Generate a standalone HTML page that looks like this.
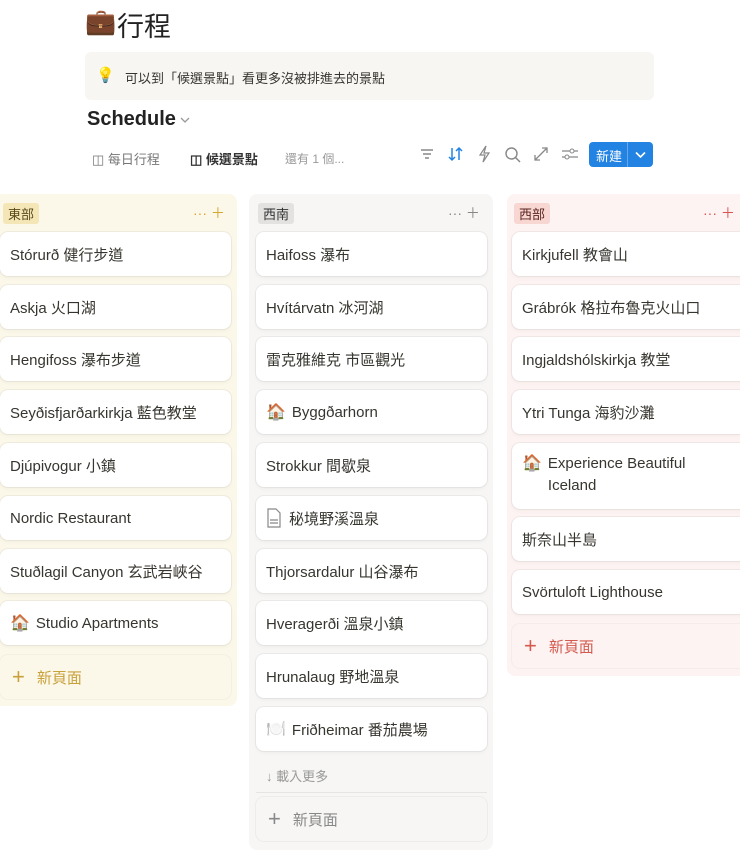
<!DOCTYPE html>
<html><head><meta charset="utf-8"><style>
*{box-sizing:border-box;margin:0;padding:0}
body{width:740px;height:857px;background:#fff;font-family:"Liberation Sans","Noto Sans CJK TC",sans-serif;color:#37352f;position:relative;overflow:hidden}
.a{position:absolute}
.col{position:absolute;border-radius:8px}
.card{position:absolute;height:44px;background:#fff;border-radius:8px;box-shadow:0 0 0 1px rgba(15,15,15,.05),0 2px 4px rgba(15,15,15,.04);font-size:15px;padding:0 10px;display:flex;align-items:center;white-space:nowrap}
.tag{position:absolute;font-size:13px;padding:1px 5px;border-radius:3px;top:203px}
.ic{font-size:16px;margin-right:6px}
.np{position:absolute;height:44px;border-radius:8px;font-size:15px;display:flex;align-items:center;padding-left:12px}
.np b{font-weight:300;font-size:22px;margin-right:12px}
svg{position:absolute}
</style></head><body>
<div class="a" style="left:85px;top:8px;font-size:25px">💼</div>
<div class="a" style="left:117px;top:5px;font-size:27px;color:#222">行程</div>
<div class="a" style="left:85px;top:52px;width:569px;height:48px;background:#f7f6f3;border-radius:6px"></div>
<div class="a" style="left:96px;top:66px;font-size:15px">💡</div>
<div class="a" style="left:125px;top:68px;font-size:13px">可以到「候選景點」看更多沒被排進去的景點</div>
<div class="a" style="left:87px;top:108px;font-size:20px;font-weight:bold;color:#222">Schedule</div>
<svg style="left:180px;top:116px" width="10" height="8"><path d="M1 2l4 4 4-4" stroke="#999" fill="none" stroke-width="1.3"/></svg>
<div class="a" style="left:92px;top:149px;font-size:13px;color:#777">◫ 每日行程</div>
<div class="a" style="left:190px;top:149px;font-size:13px;color:#333;font-weight:bold">◫ 候選景點</div>
<div class="a" style="left:285px;top:150px;font-size:12px;color:#999">還有 1 個...</div>
<svg style="left:419px;top:147px" width="16" height="14"><path d="M2 3h12M4 7h8M6 11h4" stroke="#888" stroke-width="1.4"/></svg>
<svg style="left:447px;top:146px" width="18" height="16"><path d="M5 2v12M2 11l3 3 3-3M12 14V2M9 5l3-3 3 3" stroke="#2383e2" fill="none" stroke-width="1.5"/></svg>
<svg style="left:477px;top:145px" width="14" height="18"><path d="M9 1L3 10h5l-2 7 6-9H7z" stroke="#888" fill="none" stroke-width="1.2"/></svg>
<svg style="left:504px;top:146px" width="18" height="18"><circle cx="7.5" cy="7.5" r="5.5" stroke="#888" fill="none" stroke-width="1.4"/><path d="M11.5 11.5l4.5 4.5" stroke="#888" stroke-width="1.5"/></svg>
<svg style="left:533px;top:146px" width="16" height="16"><path d="M2 14L14 2M9 2h5v5M2 9v5h5" stroke="#888" fill="none" stroke-width="1.3"/></svg>
<svg style="left:561px;top:147px" width="18" height="14"><path d="M1 4h16M1 10h16" stroke="#888" stroke-width="1.2"/><circle cx="11" cy="4" r="2" fill="#fff" stroke="#888"/><circle cx="6" cy="10" r="2" fill="#fff" stroke="#888"/></svg>
<div class="a" style="left:589px;top:142px;width:64px;height:25px;background:#2383e2;border-radius:4px;color:#fff;font-size:13px;padding:4px 7px">新建<span style="position:absolute;left:38px;top:0;height:25px;border-left:1px solid rgba(255,255,255,.3);width:26px"><svg style="left:7px;top:9px" width="11" height="8"><path d="M1 1.5l4.5 4.5 4.5-4.5" stroke="#fff" fill="none" stroke-width="1.6"/></svg></span></div>

<div class="col" style="left:-5px;top:194px;width:242px;height:512px;background:#fbf8ea"></div>
<div class="col" style="left:249px;top:194px;width:244px;height:656px;background:#f7f6f4"></div>
<div class="col" style="left:507px;top:194px;width:240px;height:482px;background:#fdf3f2"></div>

<div class="tag" style="left:3px;background:#f5e6b8;color:#5a4a1a">東部</div>
<div class="a" style="left:193px;top:203px;color:#d4a730;font-size:14px">··· ＋</div>
<div class="tag" style="left:258px;background:#e3e2e0;color:#333">西南</div>
<div class="a" style="left:448px;top:203px;color:#888;font-size:14px">··· ＋</div>
<div class="tag" style="left:514px;background:#f8d6d2;color:#5a2520">西部</div>
<div class="a" style="left:703px;top:203px;color:#d9534f;font-size:14px">··· ＋</div>

<div class="card" style="left:0;top:232px;width:231px">Stórurð 健行步道</div>
<div class="card" style="left:0;top:285px;width:231px">Askja 火口湖</div>
<div class="card" style="left:0;top:337px;width:231px">Hengifoss 瀑布步道</div>
<div class="card" style="left:0;top:390px;width:231px">Seyðisfjarðarkirkja 藍色教堂</div>
<div class="card" style="left:0;top:443px;width:231px">Djúpivogur 小鎮</div>
<div class="card" style="left:0;top:496px;width:231px">Nordic Restaurant</div>
<div class="card" style="left:0;top:549px;width:231px">Stuðlagil Canyon 玄武岩峽谷</div>
<div class="card" style="left:0;top:601px;width:231px"><span class="ic">🏠</span>Studio Apartments</div>
<div class="np" style="left:0;top:655px;width:231px;color:#c9a13a;background:#fbf8ea;box-shadow:0 0 0 1px rgba(0,0,0,.03)"><b>+</b>新頁面</div>

<div class="card" style="left:256px;top:232px;width:231px">Haifoss 瀑布</div>
<div class="card" style="left:256px;top:285px;width:231px">Hvítárvatn 冰河湖</div>
<div class="card" style="left:256px;top:337px;width:231px">雷克雅維克 市區觀光</div>
<div class="card" style="left:256px;top:390px;width:231px"><span class="ic">🏠</span>Byggðarhorn</div>
<div class="card" style="left:256px;top:443px;width:231px">Strokkur 間歇泉</div>
<div class="card" style="left:256px;top:496px;width:231px"><svg style="left:10px;top:12px" width="16" height="20"><path d="M2 1h8l4 4v14H2z M4 12h8M4 15h8" stroke="#888" fill="none" stroke-width="1.2"/></svg><span style="margin-left:23px">秘境野溪溫泉</span></div>
<div class="card" style="left:256px;top:549px;width:231px">Thjorsardalur 山谷瀑布</div>
<div class="card" style="left:256px;top:601px;width:231px">Hveragerði 溫泉小鎮</div>
<div class="card" style="left:256px;top:654px;width:231px">Hrunalaug 野地溫泉</div>
<div class="card" style="left:256px;top:707px;width:231px"><span class="ic">🍽️</span>Friðheimar 番茄農場</div>
<div class="a" style="left:266px;top:766px;font-size:13px;color:#999">↓ 載入更多</div>
<div class="a" style="left:256px;top:792px;width:231px;border-top:1px solid #e6e5e2"></div>
<div class="np" style="left:256px;top:797px;width:231px;color:#888;box-shadow:0 0 0 1px rgba(0,0,0,.04)"><b>+</b>新頁面</div>

<div class="card" style="left:512px;top:232px;width:240px">Kirkjufell 教會山</div>
<div class="card" style="left:512px;top:285px;width:240px">Grábrók 格拉布魯克火山口</div>
<div class="card" style="left:512px;top:337px;width:240px">Ingjaldshólskirkja 教堂</div>
<div class="card" style="left:512px;top:390px;width:240px">Ytri Tunga 海豹沙灘</div>
<div class="card" style="left:512px;top:443px;width:240px;height:66px;align-items:flex-start;padding-top:10px;white-space:normal;line-height:22px"><span class="ic">🏠</span><span>Experience Beautiful<br>Iceland</span></div>
<div class="card" style="left:512px;top:517px;width:240px">斯奈山半島</div>
<div class="card" style="left:512px;top:570px;width:240px">Svörtuloft Lighthouse</div>
<div class="np" style="left:512px;top:624px;width:240px;color:#d45a4f;box-shadow:0 0 0 1px rgba(0,0,0,.03)"><b>+</b>新頁面</div>
</body></html>
